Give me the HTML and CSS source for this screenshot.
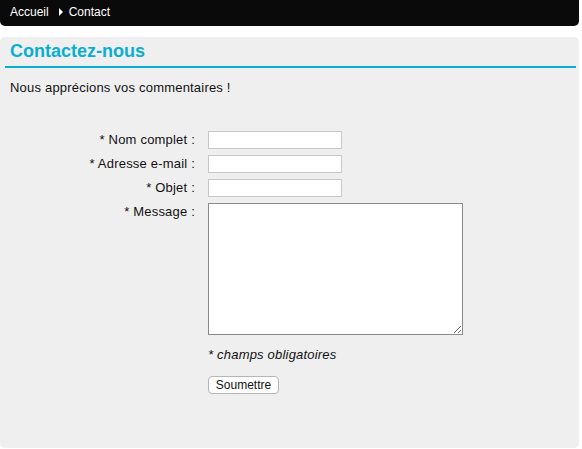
FILE: index.html
```html
<!DOCTYPE html>
<html lang="fr">
<head>
<meta charset="utf-8">
<title>Contact</title>
<link rel="stylesheet" href="styles.css">
</head>
<body>
<nav class="crumbs">
  <a class="crumb" href="#">Accueil</a>
  <span class="caret"></span>
  <span class="crumb">Contact</span>
</nav>
<main class="panel">
  <h1 class="title">Contactez-nous</h1>
  <p class="intro">Nous apprécions vos commentaires !</p>
  <form class="form">
    <label class="label" for="nom">* Nom complet :</label>
    <input class="field" id="nom" type="text">
    <label class="label" for="mail">* Adresse e-mail :</label>
    <input class="field" id="mail" type="text">
    <label class="label" for="objet">* Objet :</label>
    <input class="field" id="objet" type="text">
    <label class="label" for="msg">* Message :</label>
    <textarea class="area" id="msg"></textarea>
    <span></span>
    <p class="note">* champs obligatoires</p>
    <span></span>
    <div><button class="submit" type="button">Soumettre</button></div>
  </form>
</main>
</body>
</html>
```
FILE: styles.css
```css
html, body {
  margin: 0;
  padding: 0;
  background: #fff;
  font-family: "Liberation Sans", Arial, sans-serif;
  color: #111;
}
.crumbs {
  width: 579px;
  height: 26px;
  background: #0a0a0a;
  border-radius: 0 0 5px 5px;
  display: flex;
  align-items: center;
  padding: 0 0 2px 10px;
  box-sizing: border-box;
  font-size: 12px;
  color: #fff;
}
.crumb {
  color: #fff;
  text-decoration: none;
}
.caret {
  width: 0;
  height: 0;
  border-top: 4px solid transparent;
  border-bottom: 4px solid transparent;
  border-left: 4px solid #fff;
  margin: 0 6px 0 10px;
}
.panel {
  width: 579px;
  height: 411px;
  margin-top: 11px;
  background: #efefef;
  border-radius: 5px;
  padding: 3px 3px 0 5px;
  box-sizing: border-box;
}
.title {
  margin: 0;
  padding: 0 0 4px 5px;
  font-size: 18px;
  line-height: 22px;
  font-weight: bold;
  color: #0aaed2;
  border-bottom: 2px solid #0aaed2;
}
.intro {
  margin: 12px 0 0 5px;
  font-size: 13px;
  line-height: 16px;
  letter-spacing: 0.2px;
}
.form {
  display: grid;
  grid-template-columns: 190px 255px;
  column-gap: 13px;
  row-gap: 6px;
  margin-top: 35px;
  align-items: start;
}
.label {
  text-align: right;
  font-size: 13px;
  line-height: 18px;
  letter-spacing: 0.2px;
}
.field {
  width: 134px;
  height: 18px;
  box-sizing: border-box;
  border: 1px solid #c8c8c8;
  background: #fff;
  margin: 0;
  padding: 0 2px;
}
.area {
  width: 255px;
  height: 132px;
  box-sizing: border-box;
  border: 1px solid #8a8a8a;
  background: #fff;
  margin: 0;
  resize: both;
}
.note {
  margin: 6px 0 0 0;
  font-size: 13px;
  line-height: 16px;
  font-style: italic;
  letter-spacing: 0.2px;
}
.submit {
  margin-top: 7px;
  width: 71px;
  height: 18px;
  padding: 0;
  font-family: "Liberation Sans", Arial, sans-serif;
  font-size: 12px;
  color: #111;
  background: #fff;
  border: 1px solid #b5b5b5;
  border-radius: 4px;
}
```
